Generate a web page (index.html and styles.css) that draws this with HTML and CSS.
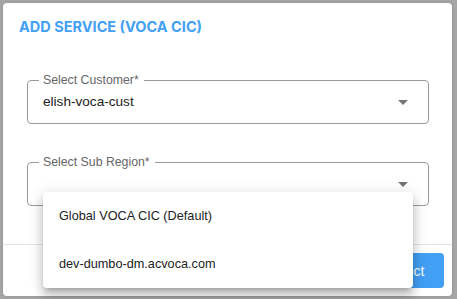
FILE: index.html
```html
<!DOCTYPE html>
<html>
<head>
<meta charset="utf-8">
<link rel="stylesheet" href="styles.css">
</head>
<body>
<div class="dialog">
  <h2 class="title">ADD SERVICE (VOCA CIC)</h2>
  <div class="content">
    <div class="field">
      <span class="label">Select Customer*</span>
      <span class="value">elish-voca-cust</span>
      <svg class="arrow" width="10" height="5" viewBox="0 0 10 5"><path d="M0 0h10L5 5z" fill="#757575"/></svg>
    </div>
    <div class="field field-gap">
      <span class="label">Select Sub Region*</span>
      <span class="value"></span>
      <svg class="arrow" width="10" height="5" viewBox="0 0 10 5"><path d="M0 0h10L5 5z" fill="#757575"/></svg>
    </div>
  </div>
  <div class="actions">
    <button class="btn">Select</button>
  </div>
  <ul class="menu">
    <li class="item">Global VOCA CIC (Default)</li>
    <li class="item">dev-dumbo-dm.acvoca.com</li>
  </ul>
</div>
</body>
</html>
```
FILE: styles.css
```css
* { box-sizing: border-box; }
html, body { margin: 0; }
body {
  background: #a6a6a6;
  padding: 3px;
  font-family: "Liberation Sans", Arial, sans-serif;
}
.dialog {
  position: relative;
  width: 449px;
  height: 293px;
  background: #fff;
  border-radius: 4px;
  display: flex;
  flex-direction: column;
  box-shadow: 0 0 3px rgba(0,0,0,0.15);
}
.title {
  margin: 0;
  padding: 14px 16px 0;
  font-family: Inter, "Liberation Sans", sans-serif;
  font-weight: 700;
  font-size: 14.5px;
  line-height: 20px;
  color: #42a0f5;
}
.content {
  flex: 1;
  padding: 43px 23px 0 24px;
}
.field {
  position: relative;
  width: 402px;
  height: 44px;
  border: 1px solid #9a9a9a;
  border-radius: 4px;
  display: flex;
  align-items: center;
  padding-left: 15px;
}
.field-gap { margin-top: 38px; }
.label {
  position: absolute;
  left: 11px;
  top: -8px;
  padding: 0 5px 0 4px;
  background: #fff;
  font-size: 12.3px;
  line-height: 14px;
  color: #666;
}
.value {
  flex: 1;
  font-size: 13.6px;
  line-height: 20px;
  color: #222;
}
.arrow {
  margin-right: 20px;
  flex: none;
}
.actions {
  border-top: 1px solid #e3e3e3;
  height: 52px;
  padding: 8px;
  display: flex;
  justify-content: flex-end;
}
.btn {
  width: 78px;
  height: 35px;
  border: 0;
  border-radius: 4px;
  background: #429ff4;
  color: #fff;
  font-family: "Liberation Sans", Arial, sans-serif;
  font-size: 14px;
  font-weight: 500;
}
.menu {
  position: absolute;
  left: 40px;
  top: 189px;
  width: 370px;
  margin: 0;
  padding: 0;
  list-style: none;
  background: #fff;
  border-radius: 4px;
  box-shadow: 0 5px 5px -3px rgba(0,0,0,0.2), 0 8px 10px 1px rgba(0,0,0,0.14), 0 3px 14px 2px rgba(0,0,0,0.12);
}
.item {
  height: 48px;
  display: flex;
  align-items: center;
  padding-left: 16px;
  font-size: 12.7px;
  color: #222;
}
```
